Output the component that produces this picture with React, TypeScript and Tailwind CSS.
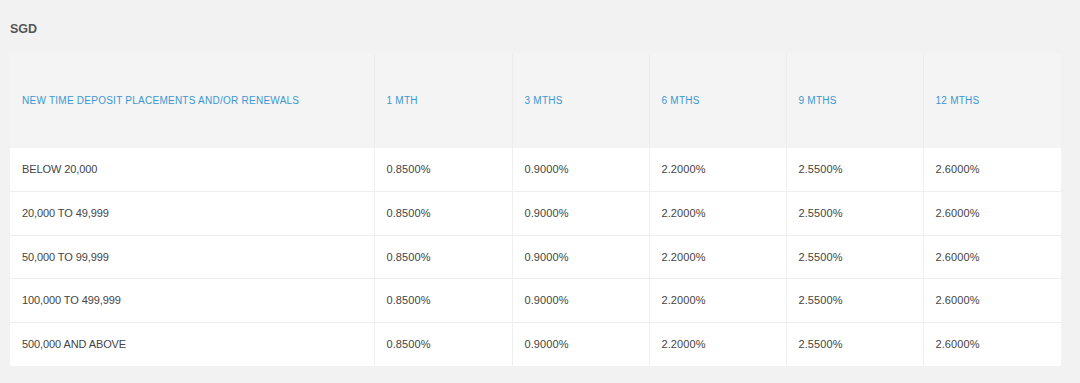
import React from "react";

const headers = ["NEW TIME DEPOSIT PLACEMENTS AND/OR RENEWALS", "1 MTH", "3 MTHS", "6 MTHS", "9 MTHS", "12 MTHS"];
const rows = ["BELOW 20,000", "20,000 TO 49,999", "50,000 TO 99,999", "100,000 TO 499,999", "500,000 AND ABOVE"];
const rates = ["0.8500%", "0.9000%", "2.2000%", "2.5500%", "2.6000%"];
const widths = ["w-[364px]", "w-[138px]", "w-[137px]", "w-[137px]", "w-[137px]", "w-[138px]"];

export default function App() {
  return (
    <div className="w-[1080px] h-[383px] bg-[#f2f2f2] pl-[10px] pt-[21px] font-['Liberation_Sans',Arial,sans-serif]">
      <div className="text-[12.5px] leading-[16px] font-bold text-[#555555]">SGD</div>
      <table className="mt-[17px] w-[1051px] border-collapse table-fixed">
        <colgroup>
          {widths.map((w, i) => (
            <col key={i} className={w} />
          ))}
        </colgroup>
        <thead>
          <tr className="bg-[#f4f4f4] h-[94px]">
            {headers.map((h, i) => (
              <th
                key={i}
                className={`text-left align-middle pl-[12px] pb-[2px] font-normal text-[10px] tracking-[0.25px] text-[#3b97d3] ${i > 0 ? "border-l border-[#ececec]" : ""}`}
              >
                {h}
              </th>
            ))}
          </tr>
        </thead>
        <tbody>
          {rows.map((r, ri) => (
            <tr key={ri} className={`bg-white h-[43.6px] ${ri > 0 ? "border-t border-[#eeeeee]" : ""}`}>
              <td className="pl-[12px] text-[11px] tracking-[-0.1px] text-[#444444]">{r}</td>
              {rates.map((v, ci) => (
                <td key={ci} className="pl-[12px] text-[11px] tracking-[0.1px] text-[#444444] border-l border-[#f0f0f0]">
                  {v}
                </td>
              ))}
            </tr>
          ))}
        </tbody>
      </table>
    </div>
  );
}
